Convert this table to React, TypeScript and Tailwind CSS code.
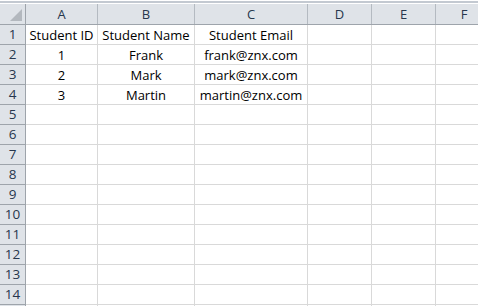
import React from 'react'

const COLS = [
  { key: 'A', w: 'w-[72px]' },
  { key: 'B', w: 'w-[97px]' },
  { key: 'C', w: 'w-[113px]' },
  { key: 'D', w: 'w-[64px]' },
  { key: 'E', w: 'w-[64px]' },
]

const DATA: string[][] = [
  ['Student ID', 'Student Name', 'Student Email'],
  ['1', 'Frank', 'frank@znx.com'],
  ['2', 'Mark', 'mark@znx.com'],
  ['3', 'Martin', 'martin@znx.com'],
]

const ROWS = Array.from({ length: 14 }, (_, i) => i + 1)

function ColumnHeader() {
  return (
    <div className="flex h-[21px] bg-[#dfe3e8] border-b border-[#9ea4ab] text-[#27374d]">
      {/* corner */}
      <div className="w-[26px] shrink-0 border-r border-[#9ea4ab] flex items-end justify-end pr-[3px] pb-[3px]">
        <svg width="12" height="12" viewBox="0 0 12 12">
          <polygon points="12,0 12,12 0,12" fill="#b3b8be" />
        </svg>
      </div>
      {COLS.map(c => (
        <div key={c.key} className={`${c.w} shrink-0 border-r border-[#b4bac1] flex items-center justify-center`}>
          {c.key}
        </div>
      ))}
      <div className="flex-1 flex items-center justify-center pl-[14px]">F</div>
    </div>
  )
}

function Row({ n }: { n: number }) {
  const vals = DATA[n - 1] ?? []
  return (
    <div className="flex h-[20px] shrink-0">
      <div className="w-[26px] shrink-0 bg-[#dfe3e8] border-r border-b border-[#9ea4ab] flex items-center justify-center text-[#27374d] text-[13.5px] pt-px">
        {n}
      </div>
      {COLS.map((c, i) => (
        <div key={c.key} className={`${c.w} shrink-0 border-r border-b border-[#d9d9d9] flex items-center justify-center text-black whitespace-nowrap pt-px`}>
          {vals[i] ?? ''}
        </div>
      ))}
      <div className="flex-1 border-b border-[#d9d9d9]" />
    </div>
  )
}

export default function App() {
  return (
    <div className="w-[478px] h-[306px] overflow-hidden bg-white font-['Open_Sans',_sans-serif] text-[13px] leading-none flex flex-col">
      {/* top strip */}
      <div className="h-[4px] shrink-0 bg-white pt-px">
        <div className="h-[2px] bg-[#c3c9d1]" />
      </div>
      <ColumnHeader />
      {ROWS.map(n => (
        <Row key={n} n={n} />
      ))}
      {/* partially visible next row */}
      <div className="flex flex-1">
        <div className="w-[26px] shrink-0 bg-[#dfe3e8] border-r border-[#9ea4ab]" />
        {COLS.map(c => (
          <div key={c.key} className={`${c.w} shrink-0 border-r border-[#d9d9d9]`} />
        ))}
        <div className="flex-1" />
      </div>
    </div>
  )
}
